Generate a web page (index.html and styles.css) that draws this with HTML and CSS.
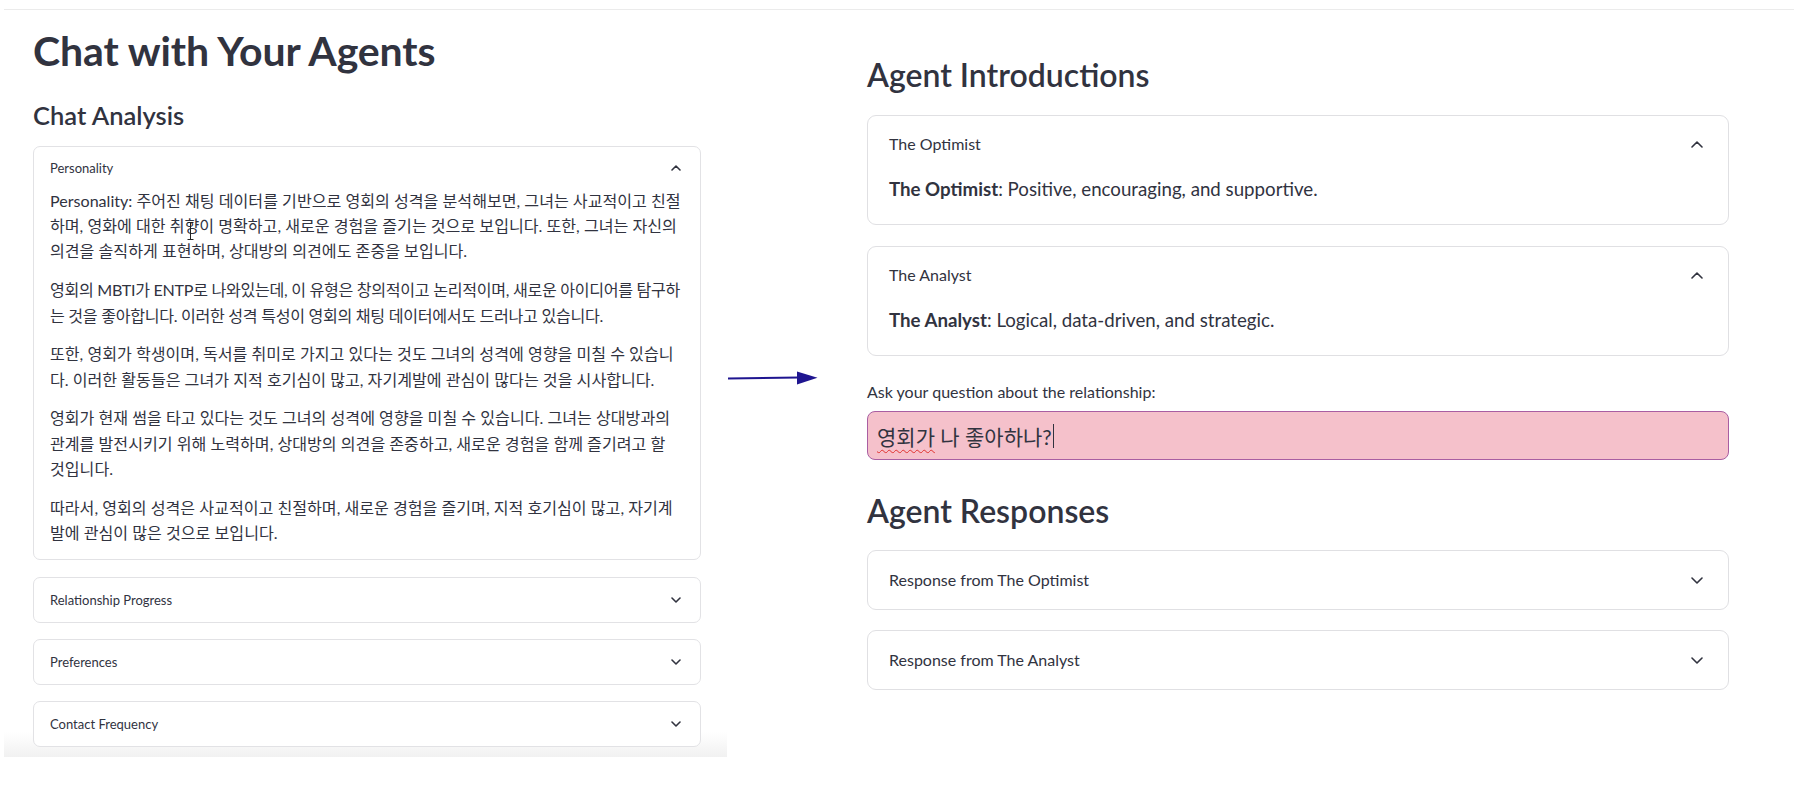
FILE: index.html
```html
<!DOCTYPE html>
<html lang="ko">
<head>
<meta charset="utf-8">
<title>Chat with Your Agents</title>
<link rel="stylesheet" href="styles.css">
</head>
<body>
<div class="topline"></div>
<div class="stage">
  <section class="left-shot">
    <h1 class="title">Chat with Your Agents</h1>
    <h3 class="sub">Chat Analysis</h3>

    <div class="exp exp-open">
      <div class="exp-head">
        <span>Personality</span>
        <svg class="chev-s" viewBox="0 0 10 6" width="10" height="6"><polyline points="1,5 5,1 9,5"/></svg>
      </div>
      <div class="exp-body">
        <p>Personality: 주어진 채팅 데이터를 기반으로 영회의 성격을 분석해보면, 그녀는 사교적이고 친절하며, 영화에 대한 취향이 명확하고, 새로운 경험을 즐기는 것으로 보입니다. 또한, 그녀는 자신의 의견을 솔직하게 표현하며, 상대방의 의견에도 존중을 보입니다.</p>
        <p class="tight">영회의 MBTI가 ENTP로 나와있는데, 이 유형은 창의적이고 논리적이며, 새로운 아이디어를 탐구하는 것을 좋아합니다. 이러한 성격 특성이 영회의 채팅 데이터에서도 드러나고 있습니다.</p>
        <p>또한, 영회가 학생이며, 독서를 취미로 가지고 있다는 것도 그녀의 성격에 영향을 미칠 수 있습니다. 이러한 활동들은 그녀가 지적 호기심이 많고, 자기계발에 관심이 많다는 것을 시사합니다.</p>
        <p>영회가 현재 썸을 타고 있다는 것도 그녀의 성격에 영향을 미칠 수 있습니다. 그녀는 상대방과의 관계를 발전시키기 위해 노력하며, 상대방의 의견을 존중하고, 새로운 경험을 함께 즐기려고 할 것입니다.</p>
        <p>따라서, 영회의 성격은 사교적이고 친절하며, 새로운 경험을 즐기며, 지적 호기심이 많고, 자기계발에 관심이 많은 것으로 보입니다.</p>
      </div>
    </div>

    <div class="exp exp-closed">
      <div class="exp-head">
        <span>Relationship Progress</span>
        <svg class="chev-s" viewBox="0 0 10 6" width="10" height="6"><polyline points="1,1 5,5 9,1"/></svg>
      </div>
    </div>
    <div class="exp exp-closed">
      <div class="exp-head">
        <span>Preferences</span>
        <svg class="chev-s" viewBox="0 0 10 6" width="10" height="6"><polyline points="1,1 5,5 9,1"/></svg>
      </div>
    </div>
    <div class="exp exp-closed">
      <div class="exp-head">
        <span>Contact Frequency</span>
        <svg class="chev-s" viewBox="0 0 10 6" width="10" height="6"><polyline points="1,1 5,5 9,1"/></svg>
      </div>
    </div>

    <svg class="ibeam" viewBox="0 0 7 18" width="7" height="18"><path d="M0.5 0.5h6M3.5 0.5v17M0.5 17.5h6"/></svg>
  </section>

  <div class="arrow-col">
    <svg class="arrow" viewBox="0 0 91 14" width="91" height="14">
      <line x1="1" y1="7.6" x2="72" y2="6.6"/>
      <polygon points="70,0.5 90.5,6.8 70,13.5"/>
    </svg>
  </div>

  <section class="right-shot">
    <h2 class="rh">Agent Introductions</h2>

    <div class="rexp">
      <div class="rexp-head">
        <span>The Optimist</span>
        <svg class="chev-l" viewBox="0 0 12 7" width="12" height="7"><polyline points="1,6 6,1 11,6"/></svg>
      </div>
      <div class="rexp-body"><strong>The Optimist</strong>: Positive, encouraging, and supportive.</div>
    </div>

    <div class="rexp">
      <div class="rexp-head">
        <span>The Analyst</span>
        <svg class="chev-l" viewBox="0 0 12 7" width="12" height="7"><polyline points="1,6 6,1 11,6"/></svg>
      </div>
      <div class="rexp-body"><strong>The Analyst</strong>: Logical, data-driven, and strategic.</div>
    </div>

    <div class="ask-label">Ask your question about the relationship:</div>
    <div class="ask-input"><span class="typo">영회가</span> 나 좋아하나?<span class="caret"></span></div>

    <h2 class="rh rh-second">Agent Responses</h2>

    <div class="rexp rexp-closed">
      <div class="rexp-head">
        <span>Response from The Optimist</span>
        <svg class="chev-l" viewBox="0 0 12 7" width="12" height="7"><polyline points="1,1 6,6 11,1"/></svg>
      </div>
    </div>
    <div class="rexp rexp-closed">
      <div class="rexp-head">
        <span>Response from The Analyst</span>
        <svg class="chev-l" viewBox="0 0 12 7" width="12" height="7"><polyline points="1,1 6,6 11,1"/></svg>
      </div>
    </div>
  </section>
</div>
</body>
</html>
```

FILE: styles.css
```css
* { box-sizing: border-box; }

body {
  margin: 0;
  background: #ffffff;
  color: #31333f;
  font-family: "Lato", "Noto Sans CJK KR", sans-serif;
}

.topline {
  height: 1px;
  margin: 9px 0 0 4px;
  background: #ebebeb;
}

.stage {
  display: flex;
  align-items: flex-start;
}

/* ---------- left screenshot ---------- */
.left-shot {
  position: relative;
  width: 723px;
  height: 747px;
  margin-left: 4px;
  padding: 16px 26px 0 29px;
  background: linear-gradient(to bottom, #ffffff 0, #ffffff 722px, #f1f1f1 747px);
}

.title {
  margin: 0;
  font-size: 41px;
  line-height: 49px;
  font-weight: 700;
  letter-spacing: -0.1px;
}

.sub {
  margin: 25px 0 16px;
  font-size: 25.5px;
  line-height: 30px;
  font-weight: 600;
}

.exp {
  border: 1px solid #e2e2e5;
  border-radius: 7px;
  background: #ffffff;
}

.exp + .exp { margin-top: 16px; }
.exp-open + .exp { margin-top: 17px; }

.exp-head {
  display: flex;
  align-items: center;
  justify-content: space-between;
  padding: 0 19px 0 16px;
  font-size: 13px;
  line-height: 20px;
}

.exp-open .exp-head { padding-top: 11px; }
.exp-closed .exp-head { height: 44px; }

.chev-s polyline,
.chev-l polyline {
  fill: none;
  stroke: #31333f;
  stroke-width: 1.6;
  stroke-linecap: round;
  stroke-linejoin: round;
}

.exp-body {
  padding: 10px 16px 14px 16px;
}

.exp-body p {
  margin: 0 0 13.7px;
  font-size: 16.1px;
  line-height: 25.2px;
}

.exp-body p.tight { letter-spacing: -0.3px; }

.exp-body p:last-child { margin-bottom: 0; }

.ibeam {
  position: absolute;
  left: 183px;
  top: 212px;
}

.ibeam path {
  fill: none;
  stroke: #222222;
  stroke-width: 1;
}

/* ---------- arrow ---------- */
.arrow-col {
  width: 140px;
  padding-top: 361px;
}

.arrow { display: block; }
.arrow line { stroke: #1f1590; stroke-width: 2; }
.arrow polygon { fill: #1f1590; }

/* ---------- right screenshot ---------- */
.right-shot {
  width: 862px;
  padding-top: 46px;
}

.rh {
  margin: 0 0 21px;
  font-size: 32px;
  line-height: 38px;
  font-weight: 600;
}

.rh-second { margin: 32px 0 20px; }

.rexp {
  border: 1px solid #e0e0e3;
  border-radius: 9px;
  background: #ffffff;
}

.rexp + .rexp { margin-top: 21px; }
.rexp-closed + .rexp-closed { margin-top: 20px; }

.rexp-head {
  display: flex;
  align-items: center;
  justify-content: space-between;
  padding: 16px 25px 18px 21px;
  font-size: 16px;
  line-height: 24px;
}

.rexp-closed .rexp-head { padding: 17px 25px 17px 21px; }

.rexp-body {
  padding: 0 21px 20px;
  font-size: 18.7px;
  line-height: 30px;
}

.rexp-body strong { font-weight: 700; }

.ask-label {
  margin-top: 24px;
  font-size: 16px;
  line-height: 24px;
}

.ask-input {
  display: flex;
  align-items: center;
  height: 49px;
  margin-top: 7px;
  padding-left: 9px;
  border: 1px solid #a95ea2;
  border-radius: 8px;
  background: #f5c1cb;
  font-size: 21px;
  white-space: pre;
}

.typo {
  text-decoration: underline wavy #e0322f;
  text-decoration-thickness: 1px;
  text-underline-offset: 4px;
  text-decoration-skip-ink: none;
}

.caret {
  display: inline-block;
  width: 1px;
  height: 24px;
  margin-left: 1px;
  background: #31333f;
}
```
